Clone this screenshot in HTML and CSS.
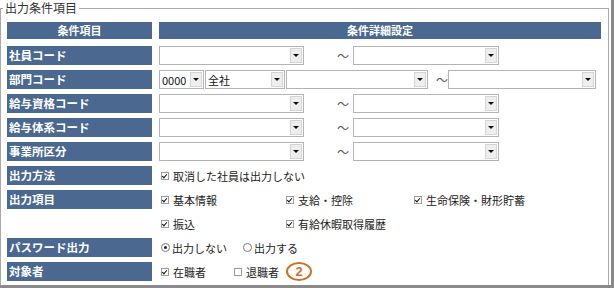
FILE: index.html
```html
<!DOCTYPE html>
<html lang="ja">
<head>
<meta charset="utf-8">
<link rel="stylesheet" href="styles.css">
</head>
<body>
<div class="frame">
<fieldset class="panel">
  <legend class="legend">出力条件項目</legend>
  <div class="grid">
    <div class="head">条件項目</div>
    <div class="head">条件詳細設定</div>

    <div class="lbl">社員コード</div>
    <div class="val">
      <div class="sel w145"><span class="txt"></span><i class="btn"></i></div>
      <span class="tilde">～</span>
      <div class="sel w146"><span class="txt"></span><i class="btn"></i></div>
    </div>

    <div class="lbl">部門コード</div>
    <div class="val">
      <div class="sel w45"><span class="txt">0000</span><i class="btn"></i></div>
      <div class="sel w80 ml1"><span class="txt">全社</span><i class="btn"></i></div>
      <div class="sel w142 ml1"><span class="txt"></span><i class="btn"></i></div>
      <span class="tilde t2">～</span>
      <div class="sel w148"><span class="txt"></span><i class="btn"></i></div>
    </div>

    <div class="lbl">給与資格コード</div>
    <div class="val">
      <div class="sel w145"><span class="txt"></span><i class="btn"></i></div>
      <span class="tilde">～</span>
      <div class="sel w146"><span class="txt"></span><i class="btn"></i></div>
    </div>

    <div class="lbl">給与体系コード</div>
    <div class="val">
      <div class="sel w145"><span class="txt"></span><i class="btn"></i></div>
      <span class="tilde">～</span>
      <div class="sel w146"><span class="txt"></span><i class="btn"></i></div>
    </div>

    <div class="lbl">事業所区分</div>
    <div class="val">
      <div class="sel w145"><span class="txt"></span><i class="btn"></i></div>
      <span class="tilde">～</span>
      <div class="sel w146"><span class="txt"></span><i class="btn"></i></div>
    </div>

    <div class="lbl">出力方法</div>
    <div class="val opts">
      <span class="opt"><i class="cb on"></i>取消した社員は出力しない</span>
    </div>

    <div class="lbl">出力項目</div>
    <div class="val opts cols">
      <span class="opt"><i class="cb on"></i>基本情報</span>
      <span class="opt"><i class="cb on"></i>支給・控除</span>
      <span class="opt"><i class="cb on"></i>生命保険・財形貯蓄</span>
    </div>

    <div class="empty"></div>
    <div class="val opts cols">
      <span class="opt"><i class="cb on"></i>振込</span>
      <span class="opt"><i class="cb on"></i>有給休暇取得履歴</span>
    </div>

    <div class="lbl">パスワード出力</div>
    <div class="val opts">
      <span class="opt r1"><i class="rb on"></i>出力しない</span>
      <span class="opt"><i class="rb"></i>出力する</span>
    </div>

    <div class="lbl">対象者</div>
    <div class="val opts">
      <span class="opt r2"><i class="cb on"></i>在職者</span>
      <span class="opt"><i class="cb"></i>退職者</span>
      <span class="badge">2</span>
    </div>
  </div>
</fieldset>
</div>
</body>
</html>
```

FILE: styles.css
```css
html, body {
  margin: 0;
  padding: 0;
  background: #ffffff;
}
body {
  font-family: "Noto Sans CJK JP", "Noto Sans", sans-serif;
  color: #222;
}
.frame {
  width: 614px;
  height: 288px;
  box-sizing: border-box;
  padding-top: 1px;
  border-right: 3px solid #8a8a8a;
  border-bottom: 3px solid #8a8a8a;
  overflow: hidden;
}
.panel {
  margin: 0 2px 0 0;
  padding: 7px 0 0 0;
  height: 284px;
  box-sizing: border-box;
  border: 1px solid #a8a8a8;
  border-bottom: none;
  min-width: 0;
}
.legend {
  margin-left: 2px;
  padding: 0 2px;
  font-size: 12px;
  line-height: 14px;
  color: #333;
}
.grid {
  display: grid;
  grid-template-columns: 145px 442px;
  column-gap: 7px;
  row-gap: 5px;
  margin-left: 6px;
  grid-auto-rows: 19px;
}
.head {
  height: 17px;
  margin-bottom: 1px;
  background: #4a6890;
  color: #fff;
  font-weight: bold;
  font-size: 11px;
  line-height: 17px;
  text-align: center;
}
.lbl {
  background: #4a6890;
  color: #fff;
  font-weight: bold;
  font-size: 11.5px;
  line-height: 19px;
  padding-left: 2px;
  white-space: nowrap;
}
.val {
  display: flex;
  align-items: center;
  font-size: 11px;
}
.sel {
  height: 19px;
  box-sizing: border-box;
  border: 1px solid #b4b4b4;
  background: #fff;
  display: flex;
  align-items: center;
  justify-content: space-between;
  padding: 0 1px 0 1px;
  flex: none;
}
.txt {
  font-size: 11px;
  color: #111;
  padding-left: 1px;
}
.btn {
  width: 12px;
  height: 15px;
  box-sizing: border-box;
  background: #eeeeee;
  border: 1px solid #d4d4d4;
  display: flex;
  align-items: center;
  justify-content: center;
}
.btn::after {
  content: "";
  border-left: 3px solid transparent;
  border-right: 3px solid transparent;
  border-top: 3px solid #111;
}
.w45 { width: 45px; }
.w80 { width: 80px; }
.w142 { width: 142px; }
.w145 { width: 145px; }
.w146 { width: 146px; }
.w148 { width: 148px; }
.ml1 { margin-left: 1px; }
.tilde {
  font-size: 12px;
  color: #555;
  margin-left: 33px;
  margin-right: 4px;
  width: 12px;
  text-align: center;
}
.tilde.t2 {
  margin-left: 8px;
  margin-right: 0;
}
.opts {
  padding-left: 2px;
  color: #222;
}
.cols {
  display: grid;
  grid-template-columns: 125px 128px auto;
  align-items: center;
}
.opt {
  display: inline-flex;
  align-items: center;
  white-space: nowrap;
}
.cb {
  width: 8px;
  height: 8px;
  box-sizing: border-box;
  border: 1px solid #9a9a9a;
  margin-right: 4px;
  position: relative;
  background: #fff;
}
.cb.on::after {
  content: "";
  position: absolute;
  left: 1px;
  top: 0px;
  width: 2px;
  height: 4px;
  border-right: 1.5px solid #111;
  border-bottom: 1.5px solid #111;
  transform: rotate(40deg);
}
.rb {
  width: 9px;
  height: 9px;
  box-sizing: border-box;
  border: 1px solid #777;
  border-radius: 50%;
  margin-right: 2px;
  position: relative;
}
.rb.on::after {
  content: "";
  position: absolute;
  left: 2px;
  top: 2px;
  width: 3px;
  height: 3px;
  border-radius: 50%;
  background: #222;
}
.r1 { margin-right: 16px; }
.r2 { margin-right: 28px; }
.badge {
  margin-left: 7px;
  width: 22px;
  height: 15px;
  border: 2px solid #c9742a;
  border-radius: 50%;
  color: #c9742a;
  font-weight: bold;
  font-size: 13px;
  line-height: 15px;
  text-align: center;
  font-family: "Liberation Sans", sans-serif;
}
```
